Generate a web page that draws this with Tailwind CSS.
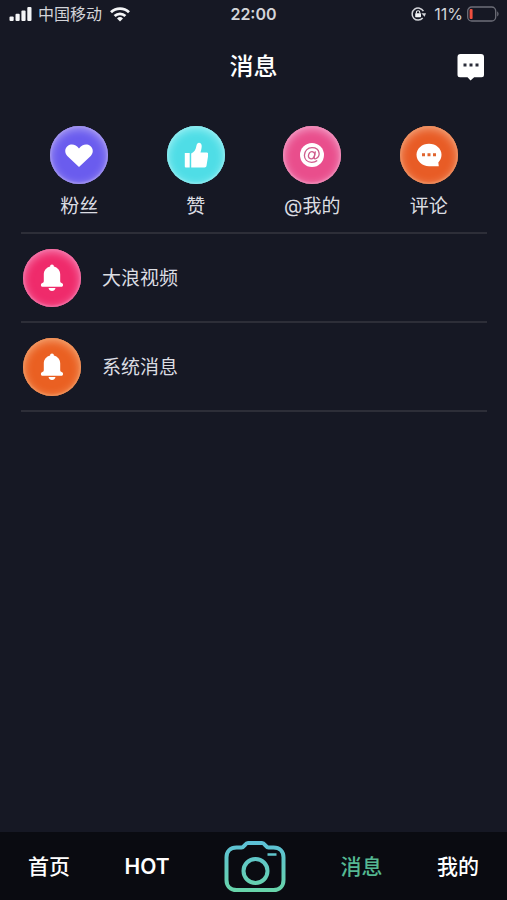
<!DOCTYPE html>
<html lang="zh-CN">
<head>
  <meta charset="UTF-8">
  <meta name="viewport" content="width=device-width, initial-scale=1.0">
  <title>消息</title>
  <script src="https://cdn.jsdelivr.net/npm/@tailwindcss/browser@4"></script>
</head>
<body class="min-h-screen flex flex-col bg-[#161824] text-[#dcdde2] font-['Inter','Noto_Sans_CJK_SC',sans-serif]">

  <!-- Status bar -->
  <div class="grid grid-cols-3 items-center h-7 px-2 text-base text-[#d3d4d9]">
    <div class="flex items-center gap-1.5">
      <svg class="w-6 h-4 shrink-0" viewBox="0 0 24 16" fill="#f4f5f7">
        <rect x="1.500" y="10.500" width="4.200" height="4.500" rx="1"/>
        <rect x="7.500" y="7.800" width="4.200" height="7.200" rx="1"/>
        <rect x="13.400" y="4.500" width="4.200" height="10.500" rx="1"/>
        <rect x="19.300" y="1" width="4.200" height="14" rx="1"/>
      </svg>
      <span class="whitespace-nowrap">中国移动</span>
      <svg class="w-6 h-4 shrink-0" viewBox="0 0 24 16" fill="none" stroke="#f4f5f7" stroke-width="2.8">
        <path d="M3 6.2a13 13 0 0 1 18 0"/>
        <path d="M6.6 10a7.8 7.8 0 0 1 10.8 0"/>
        <path d="M12 15.4l-3-3a4.3 4.3 0 0 1 6 0z" fill="#f4f5f7" stroke="none"/>
      </svg>
    </div>
    <div class="text-center font-semibold">22:00</div>
    <div class="flex items-center justify-end gap-1">
      <svg class="w-4 h-4 mr-1" viewBox="0 0 16 16" fill="none">
        <path d="M13.400 5.200A6 6 0 1 0 12.700 12" stroke="#d3d4d9" stroke-width="1.5"/>
        <path d="M11.400 7.200h4.600l-1.400 3.600z" fill="#d3d4d9"/>
        <rect x="5.200" y="7.200" width="5.800" height="4" rx=".6" fill="#f4f5f7"/>
        <path d="M6.400 7.400V6.400a1.700 1.700 0 0 1 3.400 0v1" stroke="#f4f5f7" stroke-width="1.1"/>
      </svg>
      <span>11%</span>
      <svg class="w-8 h-4 shrink-0" viewBox="0 0 32 16" fill="none">
        <rect x=".7" y="1" width="28" height="14" rx="4" stroke="#6d6e78" stroke-width="1.3"/>
        <rect x="2.6" y="3" width="3" height="10" rx="1" fill="#f0503f"/>
        <path d="M30.2 5.6c1.8.6 1.8 4.2 0 4.8z" fill="#6d6e78"/>
      </svg>
    </div>
  </div>

  <!-- Header -->
  <header class="grid grid-cols-3 items-center h-19 pt-0.5 px-5">
    <h1 class="col-start-2 text-center text-2xl font-medium text-white">消息</h1>
    <button type="button" aria-label="聊天" class="justify-self-end mr-0.5">
      <svg class="w-7 h-7" viewBox="0 0 28 28">
        <path d="M3.500 1h20.500a3 3 0 0 1 3 3v17.800a2.500 2.500 0 0 1-2.500 2.500h-7.300L13.500 27.500l-3-3.200H3a2.500 2.500 0 0 1-2.500-2.500V4a3 3 0 0 1 3-3z" fill="#fff"/>
        <path d="M6.500 10.500h3v3h-3zM12.500 10.500h3v3h-3zM18.500 10.500h3v3h-3z" fill="#2a2c38"/>
      </svg>
    </button>
  </header>

  <main class="flex-1 pl-[21px] pr-5">
    <!-- Shortcuts -->
    <nav class="grid grid-cols-4 pt-5.5 pb-[11px] border-b-2 border-[#2d2e38] text-[19px] leading-7">
      <a href="#" class="flex flex-col items-center gap-[9px]">
        <span class="flex items-center justify-center size-[58px] rounded-full bg-[#6a5cee] shadow-[inset_0_0_2px_1px_#a597ee,inset_0_2px_8px_1px_#ab9ff3]">
          <svg class="w-7 h-6" viewBox="0 0 28 24" fill="#fff">
            <path d="M14 24 2.300 13C-.8 9.800-.2 5.200 2.700 3c3.300-2.500 8.300-1.700 11.300 2.400 3-4.100 8-4.900 11.300-2.400 2.900 2.200 3.500 6.800.4 10z"/>
          </svg>
        </span>
        粉丝
      </a>
      <a href="#" class="flex flex-col items-center gap-[9px]">
        <span class="flex items-center justify-center size-[58px] rounded-full bg-[#4fdde6] shadow-[inset_0_0_2px_1px_#8eeaf0,inset_0_2px_8px_1px_#98f0f3]">
          <svg class="w-6 h-7" viewBox="0 0 24 28" fill="#fff">
            <path d="M.8 12h4.900v14.500H1.800a1 1 0 0 1-1-1z"/>
            <path d="M7.200 26.500V12.600c3-1.200 4.500-3.600 5.300-8 .4-2 1.300-2.800 2.500-2.800 1.800 0 2.800 1.500 2.700 3.500-.1 2.400-.6 4.400-1.200 6.200h6.300c1.100 0 1.700.8 1.500 2l-1.800 11.300c-.2 1.200-.8 1.700-2 1.700z"/>
          </svg>
        </span>
        赞
      </a>
      <a href="#" class="flex flex-col items-center gap-[9px]">
        <span class="flex items-center justify-center size-[58px] rounded-full bg-[#e94e8c] shadow-[inset_0_0_2px_1px_#f08fba,inset_0_2px_8px_1px_#f29dc6]">
          <svg class="w-6 h-6" viewBox="0 0 24 24" fill="none" stroke="#cf5c8c" stroke-width="1.300">
            <circle cx="12" cy="12" r="12" fill="#fff" stroke="none"/>
            <ellipse cx="11.600" cy="12.200" rx="3" ry="3.600" transform="rotate(20 11.600 12.200)"/>
            <path d="M15.400 8.400l-1.200 5.400c-.4 2 .8 2.400 2 1.700 1.800-1 3.200-3 2.900-5.400-.5-3.400-3.600-5.400-7.100-5.400-4.300 0-7.600 3.200-7.600 7.600 0 4.200 3 7 7.200 7 2.300 0 4.200-.6 5.600-1.900"/>
          </svg>
        </span>
        @我的
      </a>
      <a href="#" class="flex flex-col items-center gap-[9px]">
        <span class="flex items-center justify-center size-[58px] rounded-full bg-[#e85c26] shadow-[inset_0_0_2px_1px_#ee9262,inset_0_2px_8px_1px_#f2a17a]">
          <svg class="w-6.5 h-6" viewBox="0 0 26 24">
            <path d="M13 .8c7 0 12.500 4.800 12.500 11 0 3-1.200 5.600-3.200 7.600l.5 3.800H13C6 23.200.5 18 .5 11.800S6 .8 13 .8z" fill="#fff"/>
            <path d="M6 10.200h3v3H6zM11.500 10.200h3v3h-3zM17 10.200h3v3h-3z" fill="#e0642f"/>
          </svg>
        </span>
        评论
      </a>
    </nav>

    <!-- Message list -->
    <ul class="text-[19px] leading-7">
      <li class="border-b-2 border-[#2d2e38]">
        <a href="#" class="flex items-center gap-[21px] pt-[15px] pb-3.5 pl-0.5">
          <span class="flex items-center justify-center size-[58px] rounded-full bg-[#ef2b6b] shadow-[inset_0_0_2px_1px_#f272a6,inset_0_2px_8px_1px_#f67fb0]">
            <svg class="w-6 h-7" viewBox="0 0 24 28" fill="#fff">
              <path d="M12 .5c1.200 0 1.900.8 1.900 2 3.700 1 6.300 4 6.300 7.800V17c0 1.300.6 1.700 1.800 2.200 1.600.6 1.400 3.600-.5 3.600h-19c-1.900 0-2.100-3-.5-3.600 1.200-.5 1.800-.9 1.800-2.200v-6.700c0-3.800 2.600-6.800 6.300-7.800 0-1.200.7-2 1.900-2z"/>
              <path d="M8.500 24h7c-.4 1.900-1.700 3-3.500 3s-3.100-1.100-3.500-3z"/>
            </svg>
          </span>
          <span class="pt-0.5">大浪视频</span>
        </a>
      </li>
      <li class="border-b-2 border-[#2d2e38]">
        <a href="#" class="flex items-center gap-[21px] pt-[15px] pb-3.5 pl-0.5">
          <span class="flex items-center justify-center size-[58px] rounded-full bg-[#ea6022] shadow-[inset_0_0_2px_1px_#f0945c,inset_0_2px_8px_1px_#f4a270]">
            <svg class="w-6 h-7" viewBox="0 0 24 28" fill="#fff">
              <path d="M12 .5c1.200 0 1.900.8 1.900 2 3.700 1 6.300 4 6.300 7.800V17c0 1.300.6 1.700 1.800 2.200 1.600.6 1.400 3.600-.5 3.600h-19c-1.900 0-2.100-3-.5-3.600 1.200-.5 1.800-.9 1.800-2.200v-6.700c0-3.800 2.600-6.800 6.300-7.800 0-1.200.7-2 1.900-2z"/>
              <path d="M8.500 24h7c-.4 1.900-1.700 3-3.500 3s-3.100-1.100-3.500-3z"/>
            </svg>
          </span>
          <span class="pt-0.5">系统消息</span>
        </a>
      </li>
    </ul>
  </main>

  <!-- Bottom tabs -->
  <nav class="flex items-center justify-between h-17 pt-0.5 px-7 bg-[#0a0b11] text-[21px] font-medium text-white">
    <a href="#">首页</a>
    <a href="#" class="font-semibold">HOT</a>
    <button type="button" aria-label="拍摄">
      <svg class="w-[62px] h-13" viewBox="0 0 62 52" fill="none" stroke="url(#camera)" stroke-width="4">
        <defs>
          <linearGradient id="camera" gradientUnits="userSpaceOnUse" x1="0" y1="0" x2="0" y2="52">
            <stop offset="0" stop-color="#5cc0d8"/>
            <stop offset="1" stop-color="#68d5a8"/>
          </linearGradient>
        </defs>
        <path d="M12.500 6.500h5c3 0 3.500-4.500 6.500-4.500h14c3 0 3.500 4.500 6.500 4.500h5c6 0 10 4 10 10v22.500c0 6-4 10-10 10h-37c-6 0-10-4-10-10v-22.500c0-6 4-10 10-10z"/>
        <circle cx="31.500" cy="30" r="12"/>
        <path d="M43.500 13.500h9" stroke-width="2.500"/>
      </svg>
    </button>
    <a href="#" class="text-[#55b892]">消息</a>
    <a href="#">我的</a>
  </nav>

</body>
</html>
